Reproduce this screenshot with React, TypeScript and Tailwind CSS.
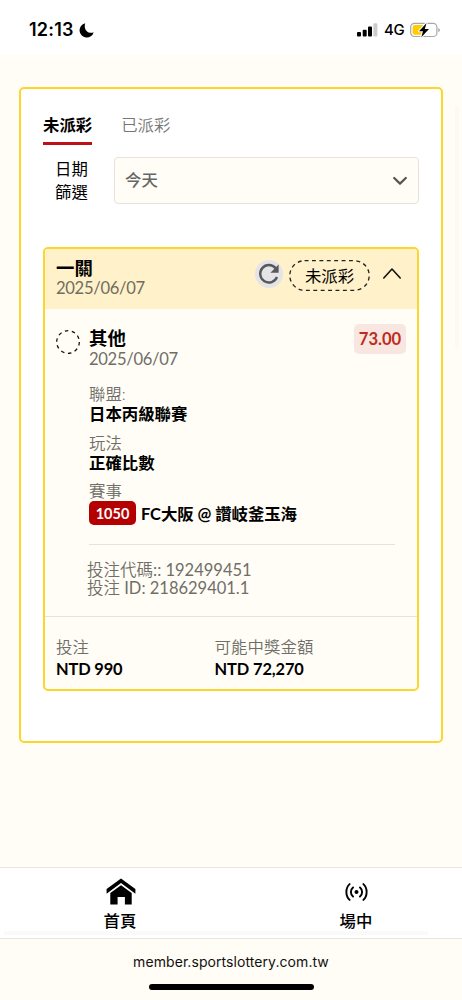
import type { ReactNode } from 'react';

// ─── Icons ────────────────────────────────────────────────────────────────────

function MoonIcon() {
  return (
    <svg className="w-[15px] h-[15px]" viewBox="0 0 15 15">
      <path d="M6.2.3A7.2 7.2 0 1 0 14.7 9.2C10.2 11.4 4 7.4 6.2.3z" fill="#000" />
    </svg>
  );
}

function SignalIcon() {
  return (
    <svg className="w-[21px] h-[14px]" viewBox="0 0 21 14">
      <rect x="0" y="9" width="4" height="4.5" rx="1" />
      <rect x="5.7" y="6.7" width="4" height="6.8" rx="1" />
      <rect x="11" y="3.6" width="4" height="9.9" rx="1" />
      <rect x="16.4" y="0.2" width="4" height="13.3" rx="1" fill="#ccc" />
    </svg>
  );
}

function BatteryIcon() {
  return (
    <svg className="w-[31px] h-[16px]" viewBox="0 0 31 16">
      <rect x="0.7" y="1.3" width="26.2" height="13.2" rx="3.8" fill="none" stroke="#a8a8a8" strokeWidth="1.2" />
      <path d="M28.3 6v4.2a2.2 2.2 0 0 0 0-4.2z" fill="#a0a0a0" />
      <path d="M5 3h9v9.8H5a2.4 2.4 0 0 1-2.4-2.4v-5A2.4 2.4 0 0 1 5 3z" fill="#fc0" />
      <path d="M16.6 1 9 9.2h4l-1.7 6.1L19 7h-4.2z" fill="#000" stroke="#fff" strokeWidth="2" paintOrder="stroke" strokeLinejoin="round" />
    </svg>
  );
}

function ChevronDownIcon() {
  return (
    <svg className="w-[14px] h-[9px]" fill="none" stroke="#555" strokeWidth={2.2} viewBox="0 0 14 9">
      <path strokeLinecap="round" strokeLinejoin="round" d="M1.2 2 7 7.6 12.8 2" />
    </svg>
  );
}

function ChevronUpIcon() {
  return (
    <svg className="w-[18px] h-[11px]" fill="none" stroke="#111" strokeWidth={1.6} viewBox="0 0 18 11">
      <path strokeLinecap="round" strokeLinejoin="round" d="M.8 10 9 1l8.2 9" />
    </svg>
  );
}

function RefreshIcon() {
  return (
    <svg className="w-7 h-7" viewBox="0 0 28 28">
      <circle cx="14" cy="14" r="14" fill="#e4e4e6" />
      <path d="M20.6 8.2A8.7 8.7 0 1 0 22 17" fill="none" stroke="#58585a" strokeWidth="2.4" />
      <path d="M23.6 4.6v8.2h-8.2z" fill="#58585a" />
    </svg>
  );
}

function HomeIcon() {
  return (
    <svg className="w-[30px] h-[27px]" viewBox="0 0 30 27">
      <path d="M15 .4 29.4 11v4.7L15 5 .6 15.7V11z" />
      <path d="M15 7.2 25.7 15v11.5h-6.8V19h-7.3v7.5H4.3V15z" />
    </svg>
  );
}

function LiveIcon() {
  return (
    <svg className="w-[23px] h-[18px]" fill="none" stroke="#000" strokeWidth={1.9} viewBox="0 0 23 18">
      <path strokeLinecap="round" d="M4.6 1.1C.3 5 .3 13 4.6 16.9M18.4 1.1c4.3 3.9 4.3 11.9 0 15.8M8 4.4c-2.8 2.2-2.8 7 0 9.2M15 4.4c2.8 2.2 2.8 7 0 9.2" />
      <circle cx="11.5" cy="9" r="2" fill="#000" stroke="none" />
    </svg>
  );
}

function DashedPill({ children }: { children: ReactNode }) {
  return (
    <div className="relative w-[81px] h-[31px] flex items-center justify-center pt-px text-[16.4px]">
      <svg className="absolute inset-0 w-[81px] h-[31px]" fill="none" viewBox="0 0 81 31">
        <rect x="0.8" y="0.7" width="79.4" height="29.6" rx="14.8" stroke="#222" strokeWidth="1.3" strokeDasharray="3.9 3.5" />
      </svg>
      {children}
    </div>
  );
}

// ─── Status bar ───────────────────────────────────────────────────────────────

function StatusBar() {
  return (
    <header className="h-[55px] bg-white flex items-center pt-[5px] pl-[29px] pr-[21px] font-[Inter]">
      <span className="w-[46px] text-[18px] leading-6 font-semibold tracking-[0.2px]">12:13</span>
      <span className="ml-[4px]"><MoonIcon /></span>
      <div className="ml-auto flex items-center">
        <SignalIcon />
        <span className="ml-[6px] w-[20px] text-[15px] leading-6 font-medium tracking-[-0.4px]">4G</span>
        <span className="ml-[6px]"><BatteryIcon /></span>
      </div>
    </header>
  );
}

// ─── Bet card ─────────────────────────────────────────────────────────────────

const details = [
  { label: '聯盟:', value: '日本丙級聯賽' },
  { label: '玩法', value: '正確比數' },
];

function BetCard() {
  return (
    <section className="w-[376px] h-[444px] border-2 border-[#fdd62b] rounded-[5px] bg-[#fffdf5] overflow-hidden flex flex-col">
      <div className="h-[60px] shrink-0 bg-[#fff1c9] flex pl-[11px] pr-[16px] pt-[9px]">
        <div>
          <p className="text-[18.4px] leading-5 font-bold">一關</p>
          <p className="text-[16.6px] leading-[21px] tracking-[-0.32px] text-[#706d61]">2025/06/07</p>
        </div>
        <div className="ml-auto h-[31px] mt-[2px] flex items-center">
          <span className="mr-[6px] -mt-[3px]"><RefreshIcon /></span>
          <DashedPill>未派彩</DashedPill>
          <span className="ml-[13px] -mt-[5px]"><ChevronUpIcon /></span>
        </div>
      </div>

      <div className="h-[308px] shrink-0 border-b border-[#e6e3dc] pl-[11px] pr-[11px] pt-[15px]">
        <div className="flex">
          <svg className="w-6 h-6 mt-[6px] shrink-0" fill="none" viewBox="0 0 24 24">
            <circle cx="12" cy="12" r="11.3" stroke="#111" strokeWidth="1.3" strokeDasharray="3.5 3.6" />
          </svg>
          <div className="ml-[9px]">
            <p className="text-[18.4px] leading-5 pt-[4px] font-bold">其他</p>
            <p className="text-[16.6px] leading-5 pt-px tracking-[-0.32px] text-[#706e69]">2025/06/07</p>
          </div>
          <div className="ml-auto w-[52px] h-[30px] rounded-[5px] bg-[#f8e6e0] text-[#bd2c20] text-[16.6px] leading-[30px] text-center font-bold">73.00</div>
        </div>

        <div className="pl-[33px] pt-[15px]">
          {details.map((d) => (
            <div key={d.label} className="h-[48.5px] leading-5">
              <p className="text-[#706e69] font-[350]">{d.label}</p>
              <p className="font-bold">{d.value}</p>
            </div>
          ))}
          <p className="leading-5 text-[#706e69] font-[350]">賽事</p>
          <div className="flex items-center h-6">
            <span className="w-[47px] h-6 rounded-[5px] bg-[#b40000] text-white text-[14.5px] leading-[25px] text-center font-bold">1050</span>
            <span className="ml-[5px] pt-[2px] font-bold whitespace-nowrap tracking-[-0.05px]">FC大阪 @ 讚岐釜玉海</span>
          </div>
        </div>

        <div className="w-[306px] mt-[19px] ml-[33px] border-t border-[#e6e3dc]" />
        <div className="pl-[31px] pt-[16px] leading-[18px] text-[#706e69] text-[16.5px]">
          <p><span className="font-[350]">投注代碼</span>:: 192499451</p>
          <p><span className="font-[350]">投注</span> ID: 218629401.1</p>
        </div>
      </div>

      <div className="flex pl-[11px] pt-[19px] leading-[22px]">
        <div className="w-[158.5px]">
          <p className="text-[#706e69] font-[350]">投注</p>
          <p className="font-bold tracking-[-0.15px]">NTD 990</p>
        </div>
        <div>
          <p className="text-[#706e69] font-[350] tracking-[0.1px]">可能中獎金額</p>
          <p className="font-bold tracking-[-0.1px]">NTD 72,270</p>
        </div>
      </div>
    </section>
  );
}

// ─── Bottom nav ───────────────────────────────────────────────────────────────

function BottomNav() {
  return (
    <nav className="relative h-[72px] border-y border-[#e5e5e2] bg-white flex justify-between pl-[103px] pr-[89px] font-medium">
      <div className="absolute left-[4px] bottom-[3px] w-[424px] h-[4px] bg-[#fafafa]" />
      <div className="relative w-[34px] flex flex-col items-center pt-[10px]">
        <span className="ml-px"><HomeIcon /></span>
        <span className="mt-[4px] leading-6">首頁</span>
      </div>
      <div className="relative w-[34px] flex flex-col items-center pt-[15px]">
        <LiveIcon />
        <span className="mt-[8px] leading-6">場中</span>
      </div>
    </nav>
  );
}

export default function App() {
  return (
    <div className="w-[462px] h-[1000px] overflow-hidden flex flex-col bg-[#fffdf5] text-black text-[16.4px] font-[Lato,'Noto_Sans_CJK_TC',sans-serif]">
      <StatusBar />

      <main className="flex-1 flex items-start pt-8 pl-[19px]">
        <div className="w-[424px] h-[656px] border-2 border-[#fdd62b] rounded-[5px] bg-white px-[22px]">
          <div className="flex h-14 gap-[29px]">
            <button className="h-14 border-b-[3px] border-[#bd1018] font-bold pt-[25px] leading-[21px] flex items-start">未派彩</button>
            <button className="h-14 text-[#777] font-[350] pt-[25px] leading-[21px] flex items-start">已派彩</button>
          </div>

          <div className="flex pt-[12px]">
            <p className="w-[71px] pl-[12px] pr-[26px] leading-[23px]">日期篩選</p>
            <div className="w-[305px] h-[47px] border border-[#e6e3dc] rounded-[4px] bg-[#fffdf5] flex items-center justify-between pl-[10px] pr-[11px] text-[#666] font-medium">
              今天
              <ChevronDownIcon />
            </div>
          </div>

          <div className="pt-[43px]">
            <BetCard />
          </div>
        </div>
        <div className="ml-[12px] mt-[19px] w-[4px] h-[243px] rounded-full bg-[#fcf9f0]" />
      </main>

      <BottomNav />
      <footer className="h-[61px] pt-[12px] flex flex-col items-center font-[Inter] text-[14px] leading-[21px] text-[#111]">
        <span className="tracking-[0.07px]">member.sportslottery.com.tw</span>
        <div className="mt-[12px] w-[165px] h-[6px] rounded-full bg-black" />
      </footer>
    </div>
  );
}
